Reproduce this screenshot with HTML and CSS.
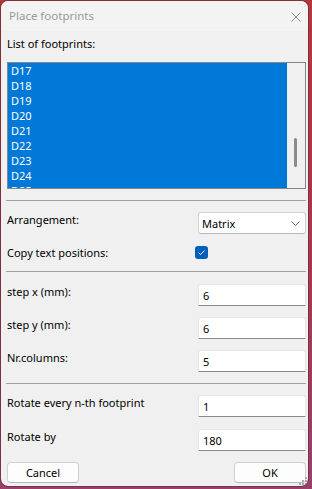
FILE: index.html
```html
<!DOCTYPE html>
<html lang="en">
<head>
    <meta charset="UTF-8">
    <meta name="viewport" content="width=device-width, initial-scale=1.0">
    <title>Place footprints</title>
    <link rel="stylesheet" href="styles.css">
</head>
<body>
    <div class="window">
        <div class="titlebar">
            <span class="title">Place footprints</span>
            <svg class="close" width="10" height="10" viewBox="0 0 10 10">
                <path d="M0.5 0.5L9.5 9.5M9.5 0.5L0.5 9.5" stroke="#8c8c8c" stroke-width="1" fill="none"/>
            </svg>
        </div>

        <div class="client">
            <div class="caption">List of footprints:</div>
            <div class="listbox">
                <div class="items">
                    <div class="item">D17</div>
                    <div class="item">D18</div>
                    <div class="item">D19</div>
                    <div class="item">D20</div>
                    <div class="item">D21</div>
                    <div class="item">D22</div>
                    <div class="item">D23</div>
                    <div class="item">D24</div>
                    <div class="item">D25</div>
                </div>
                <div class="scrollbar"><div class="thumb"></div></div>
            </div>

            <div class="sep"></div>

            <div class="row">
                <span class="label">Arrangement:</span>
                <div class="combo">
                    <span>Matrix</span>
                    <svg width="9" height="5" viewBox="0 0 9 5">
                        <path d="M0.5 0.5L4.5 4.5L8.5 0.5" stroke="#5f5f5f" stroke-width="1" fill="none"/>
                    </svg>
                </div>
            </div>
            <div class="row check-row">
                <span class="label">Copy text positions:</span>
                <span class="checkbox">
                    <svg width="13" height="13" viewBox="0 0 13 13">
                        <path d="M3.5 6.8L5.5 8.6L9.5 4.6" stroke="#ffffff" stroke-width="1" fill="none"/>
                    </svg>
                </span>
            </div>

            <div class="sep"></div>

            <div class="row step">
                <span class="label">step x (mm):</span>
                <div class="field">6</div>
            </div>
            <div class="row">
                <span class="label">step y (mm):</span>
                <div class="field">6</div>
            </div>
            <div class="row">
                <span class="label">Nr.columns:</span>
                <div class="field">5</div>
            </div>

            <div class="sep"></div>

            <div class="row rotate">
                <span class="label">Rotate every n-th footprint</span>
                <div class="field">1</div>
            </div>
            <div class="row rotate-by">
                <span class="label">Rotate by</span>
                <div class="field">180</div>
            </div>

            <div class="buttons">
                <button class="btn">Cancel</button>
                <button class="btn">OK</button>
            </div>
        </div>
        <div class="grip">
            <i style="grid-area: 1 / 3"></i>
            <i style="grid-area: 2 / 2"></i>
            <i style="grid-area: 2 / 3"></i>
            <i style="grid-area: 3 / 1"></i>
            <i style="grid-area: 3 / 2"></i>
            <i style="grid-area: 3 / 3"></i>
        </div>
    </div>
</body>
</html>
```

FILE: styles.css
```css
html, body { margin: 0; height: 100%; }
body {
    background: linear-gradient(180deg, #b8353b 0%, #a8384e 55%, #9a3f6c 100%);
    font-family: "Noto Sans", sans-serif;
    font-size: 11px;
    color: #000;
    overflow: hidden;
}

.window {
    position: relative;
    box-sizing: border-box;
    width: 309px;
    height: 487px;
    border: 1px solid rgba(90, 40, 50, 0.55);
    border-radius: 8px;
    background: #f0f0f0;
    background-clip: padding-box;
    overflow: hidden;
}

.titlebar {
    height: 30px;
    background: #f3f3f3;
    display: flex;
    align-items: center;
    justify-content: space-between;
    padding: 0 7px 0 8px;
}
.title { color: #9a9a9a; font-size: 11.5px; line-height: 15px; margin-top: -1px; }
.close { margin-top: 1px; }

.client { padding: 5px 2px 0 6px; }

.caption { line-height: 15px; }

.listbox {
    margin-top: 11px;
    height: 127px;
    box-sizing: border-box;
    border: 1px solid #828790;
    background: #f0f0f0;
    display: flex;
}
.items {
    width: 279px;
    background: #0078d7;
    overflow: hidden;
}
.item {
    color: #fff;
    line-height: 15px;
    padding-left: 3px;
}
.scrollbar {
    flex: 1;
    position: relative;
}
.thumb {
    position: absolute;
    left: 7px;
    top: 75px;
    width: 3px;
    height: 29px;
    border-radius: 2px;
    background: #8a8a8a;
}

.sep {
    height: 1px;
    background: #a0a0a0;
    margin: 11px 0 11px -1px;
}

.row {
    display: flex;
    align-items: flex-start;
    justify-content: space-between;
    margin-top: 11px;
}
.sep + .row { margin-top: 0; }
.step { padding-top: 1px; }
.label { line-height: 15px; }

.combo, .field {
    box-sizing: border-box;
    width: 108px;
    height: 22px;
    background: #fff;
    display: flex;
    align-items: center;
}
.combo {
    border: 1px solid #d0d0d0;
    border-bottom-color: #b8b8b8;
    border-radius: 3px;
    justify-content: space-between;
    padding: 0 5px 0 3px;
}
.field {
    border: 1px solid #e6e6e6;
    border-bottom: 1px solid #8a8a8a;
    border-radius: 3px 3px 0 0;
    padding-left: 4px;
}

.check-row { height: 15px; }
.checkbox {
    width: 13px;
    height: 13px;
    margin: 1px 98px 0 0;
    border-radius: 3px;
    background: #005fb8;
    display: flex;
}

.rotate-by { margin-top: 12px; }

.buttons {
    display: flex;
    justify-content: space-between;
    margin-top: 11px;
}
.btn {
    width: 72px;
    height: 21px;
    padding: 0;
    font-family: inherit;
    font-size: 11px;
    color: #000;
    background: #fdfdfd;
    border: 1px solid #d0d0d0;
    border-bottom-color: #b8b8b8;
    border-radius: 4px;
}

.grip {
    position: absolute;
    right: 1px;
    bottom: 1px;
    display: grid;
    grid-template-columns: repeat(3, 2px);
    grid-template-rows: repeat(3, 2px);
    gap: 1px;
}
.grip i { background: #a8a8a8; }
```
